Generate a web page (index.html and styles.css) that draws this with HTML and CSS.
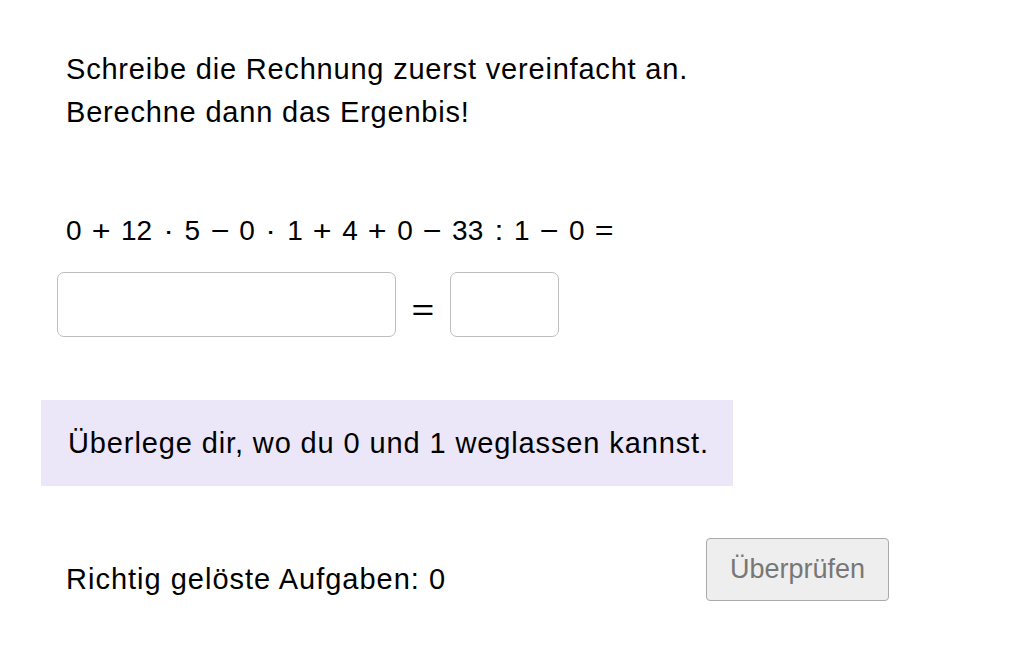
FILE: index.html
```html
<!DOCTYPE html>
<html lang="de">
<head>
<meta charset="utf-8">
<link rel="stylesheet" href="styles.css">
</head>
<body>
<div class="page">
  <div class="task">
    <p class="line">Schreibe die Rechnung zuerst vereinfacht an.</p>
    <p class="line">Berechne dann das Ergenbis!</p>
  </div>
  <div class="equation">0<span class="op">+</span>12<span class="op">·</span>5<span class="op">−</span>0<span class="op">·</span>1<span class="op">+</span>4<span class="op">+</span>0<span class="op">−</span>33<span class="op">:</span>1<span class="op">−</span>0<span class="op op-last">=</span></div>
  <div class="answer-row">
    <div class="field field-wide"></div>
    <span class="eq">=</span>
    <div class="field field-small"></div>
  </div>
  <div class="hint">Überlege dir, wo du 0 und 1 weglassen kannst.</div>
  <div class="footer">
    <span class="score">Richtig gelöste Aufgaben: 0</span>
    <button class="check" disabled>Überprüfen</button>
  </div>
</div>
</body>
</html>
```
FILE: styles.css
```css
html, body {
  margin: 0;
  padding: 0;
  background: #ffffff;
}
body {
  font-family: "Liberation Sans", Arial, sans-serif;
  color: #000000;
  width: 1032px;
  height: 645px;
  overflow: hidden;
}
.page {
  padding: 48px 0 0 41px;
}
.task {
  padding-left: 25px;
}
.line {
  margin: 0;
  font-size: 29px;
  line-height: 43px;
  letter-spacing: 0.8px;
}
.equation {
  margin-top: 80px;
  padding-left: 25px;
  font-size: 28px;
  line-height: 34px;
  white-space: pre;
}
.op {
  display: inline-block;
  margin: 0 11.5px;
  transform: scaleX(1.15);
}
.op-last {
  margin-right: 0;
}
.answer-row {
  display: flex;
  align-items: center;
  margin-top: 24px;
  padding-left: 16px;
}
.field {
  border: 1px solid #bdbdbd;
  border-radius: 7px;
  box-sizing: border-box;
  height: 65px;
}
.field-wide {
  width: 339px;
}
.field-small {
  width: 109px;
}
.eq {
  font-size: 30px;
  width: 54px;
  text-align: center;
  padding-top: 10px;
  transform: scaleX(1.3);
}
.hint {
  margin-top: 63px;
  width: 692px;
  height: 86px;
  background: #ebe6f8;
  box-sizing: border-box;
  padding-left: 27px;
  font-size: 29px;
  line-height: 86px;
  letter-spacing: 0.88px;
}
.footer {
  display: flex;
  align-items: flex-start;
  margin-top: 52px;
  width: 848px;
  justify-content: space-between;
  padding-left: 25px;
  box-sizing: border-box;
}
.score {
  font-size: 29px;
  letter-spacing: 1px;
  margin-top: 25px;
}
.check {
  width: 183px;
  height: 63px;
  background: #eeeeee;
  border: 1px solid #aaaaaa;
  border-radius: 4px;
  color: #777777;
  font-family: inherit;
  font-size: 27px;
  padding: 0;
}
```
